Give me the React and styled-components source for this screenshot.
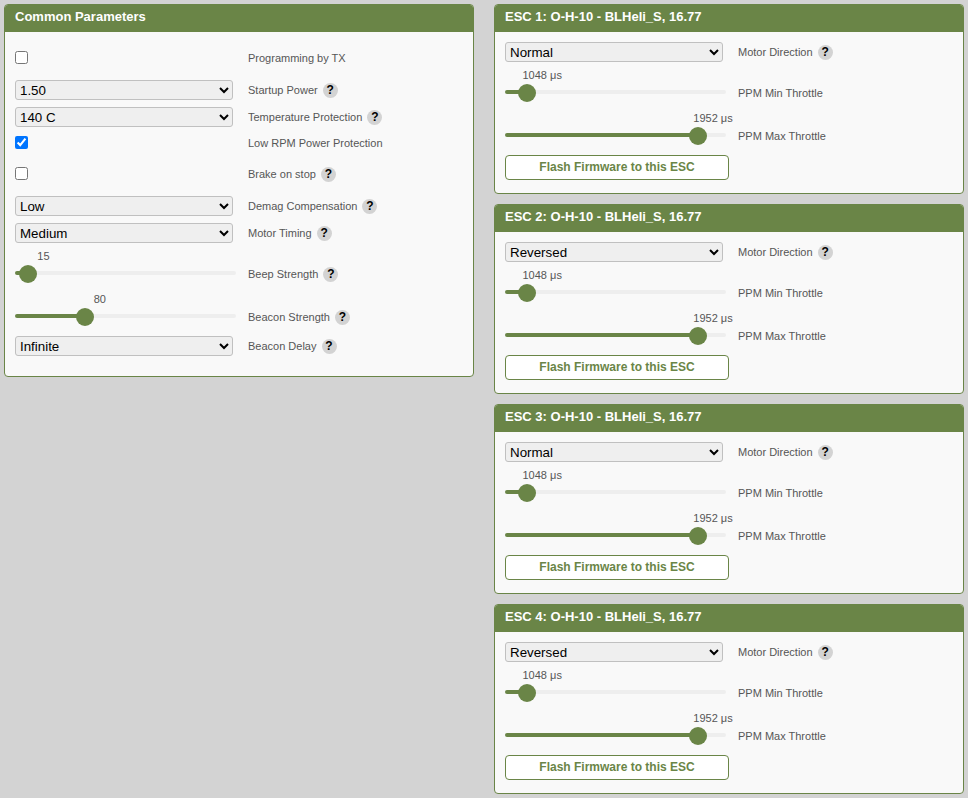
import React, { useState } from "react";
import styled, { createGlobalStyle } from "styled-components";

const green = "#6a8547";

const GlobalStyle = createGlobalStyle`
  * { box-sizing: border-box; }
  body {
    margin: 0;
    background: #d3d3d3;
    color: #565656;
    font: 11px/20px "Liberation Sans", Arial, sans-serif;
  }
`;

const Page = styled.main`
  display: grid;
  grid-template-columns: 470px 470px;
  column-gap: 20px;
  align-items: start;
  padding: 4px;
  height: 798px;
  overflow: hidden;
`;

const EscList = styled.div`
  display: flex;
  flex-direction: column;
  gap: 10px;
`;

const Panel = styled.section`
  background: #f9f9f9;
  border: 1px solid ${green};
  border-radius: 4px;
`;

const PanelTitle = styled.h2`
  margin: 0;
  height: 27px;
  padding: 0 10px;
  background: ${green};
  border-radius: 3px 3px 0 0;
  color: #fff;
  font-size: 13px;
  font-weight: bold;
  line-height: 23px;
`;

const PanelBody = styled.div`
  padding: ${(p) => (p.$esc ? "7px 10px 13px" : "6px 10px 16px")};
`;

const Row = styled.label`
  display: grid;
  grid-template-columns: 233px 1fr;
  align-items: center;
  height: ${(p) => p.$height || 27}px;
`;

const SelectRow = styled(Row)`
  padding: 3px 0 4px;
`;

const SliderRow = styled(Row)`
  height: 43px;
  align-items: start;
`;

const Caption = styled.span`
  display: flex;
  align-items: center;
  height: 20px;
  margin-top: ${(p) => p.$top || 0}px;
`;

const Help = styled.span`
  width: 15px;
  height: 15px;
  margin: 1px 0 0 5px;
  border-radius: 50%;
  background: #d3d3d3;
  color: #000;
  font-size: 12px;
  font-weight: bold;
  line-height: 14px;
  text-align: center;
`;

const Select = styled.select`
  width: 218px;
  height: 20px;
  border: 1px solid silver;
  border-radius: 3px;
  background: #efefef;
  color: #000;
  font: 13.333px "Liberation Sans", Arial, sans-serif;
`;

const Checkbox = styled.input`
  width: 13px;
  height: 13px;
  margin: 0;
`;

const SliderBox = styled.span`
  display: block;
  width: 221px;
  height: 43px;
`;

const SliderValue = styled.span`
  display: block;
  height: 18px;
  line-height: 18px;
  padding-left: ${(p) => p.$offset}px;
  white-space: nowrap;
`;

const Range = styled.input`
  appearance: none;
  display: block;
  width: 221px;
  height: 4px;
  margin: 6px 0 0;
  border-radius: 2px;
  background: linear-gradient(to right, ${green} ${(p) => p.$fill}px, #eee ${(p) => p.$fill}px);
  outline: none;

  &::-webkit-slider-thumb {
    appearance: none;
    width: 18px;
    height: 18px;
    margin-top: 2px;
    border-radius: 50%;
    background: ${green};
  }
`;

const FlashButton = styled.button`
  display: block;
  width: 224px;
  height: 25px;
  margin-top: 3px;
  padding: 0 0 2px;
  border: 1px solid ${green};
  border-radius: 4px;
  background: #fff;
  color: ${green};
  font: bold 12px "Liberation Sans", Arial, sans-serif;
`;

function Label({ text, help, top }) {
  return (
    <Caption $top={top}>
      {text}
      {help && <Help>?</Help>}
    </Caption>
  );
}

function Choice({ label, value, options }) {
  return (
    <SelectRow>
      <Select defaultValue={value}>
        {(options || [value]).map((o) => (
          <option key={o}>{o}</option>
        ))}
      </Select>
      <Label text={label} help />
    </SelectRow>
  );
}

function Check({ label, checked, help, height }) {
  return (
    <Row $height={height}>
      <Checkbox type="checkbox" defaultChecked={checked} />
      <Label text={label} help={help} />
    </Row>
  );
}

function Slider({ label, initial, min, max, unit = "", valueOffset, help }) {
  const [value, setValue] = useState(initial);
  const travel = (v) => ((v - min) / (max - min)) * 203;
  return (
    <SliderRow>
      <SliderBox>
        <SliderValue $offset={valueOffset + travel(value) - travel(initial)}>
          {value}
          {unit}
        </SliderValue>
        <Range
          type="range"
          min={min}
          max={max}
          value={value}
          $fill={travel(value) + 9}
          onChange={(e) => setValue(Number(e.target.value))}
        />
      </SliderBox>
      <Label text={label} help={help} top={17} />
    </SliderRow>
  );
}

function Esc({ number, direction }) {
  return (
    <Panel>
      <PanelTitle>ESC {number}: O-H-10 - BLHeli_S, 16.77</PanelTitle>
      <PanelBody $esc>
        <Choice label="Motor Direction" value={direction} options={["Normal", "Reversed"]} />
        <Slider label="PPM Min Throttle" initial={1048} min={984} max={2000} unit=" μs" valueOffset={17.5} />
        <Slider label="PPM Max Throttle" initial={1952} min={1000} max={2050} unit=" μs" valueOffset={188.3} />
        <FlashButton>Flash Firmware to this ESC</FlashButton>
      </PanelBody>
    </Panel>
  );
}

export default function App() {
  return (
    <>
      <GlobalStyle />
      <Page>
        <Panel>
          <PanelTitle>Common Parameters</PanelTitle>
          <PanelBody>
            <Check label="Programming by TX" height={39} />
            <Choice label="Startup Power" value="1.50" />
            <Choice label="Temperature Protection" value="140 C" />
            <Check label="Low RPM Power Protection" checked height={23} />
            <Check label="Brake on stop" help height={39} />
            <Choice label="Demag Compensation" value="Low" />
            <Choice label="Motor Timing" value="Medium" />
            <Slider label="Beep Strength" initial={15} min={10} max={255} valueOffset={22.3} help />
            <Slider label="Beacon Strength" initial={80} min={5} max={255} valueOffset={78.7} help />
            <Choice label="Beacon Delay" value="Infinite" />
          </PanelBody>
        </Panel>
        <EscList>
          {["Normal", "Reversed", "Normal", "Reversed"].map((direction, i) => (
            <Esc key={i} number={i + 1} direction={direction} />
          ))}
        </EscList>
      </Page>
    </>
  );
}
